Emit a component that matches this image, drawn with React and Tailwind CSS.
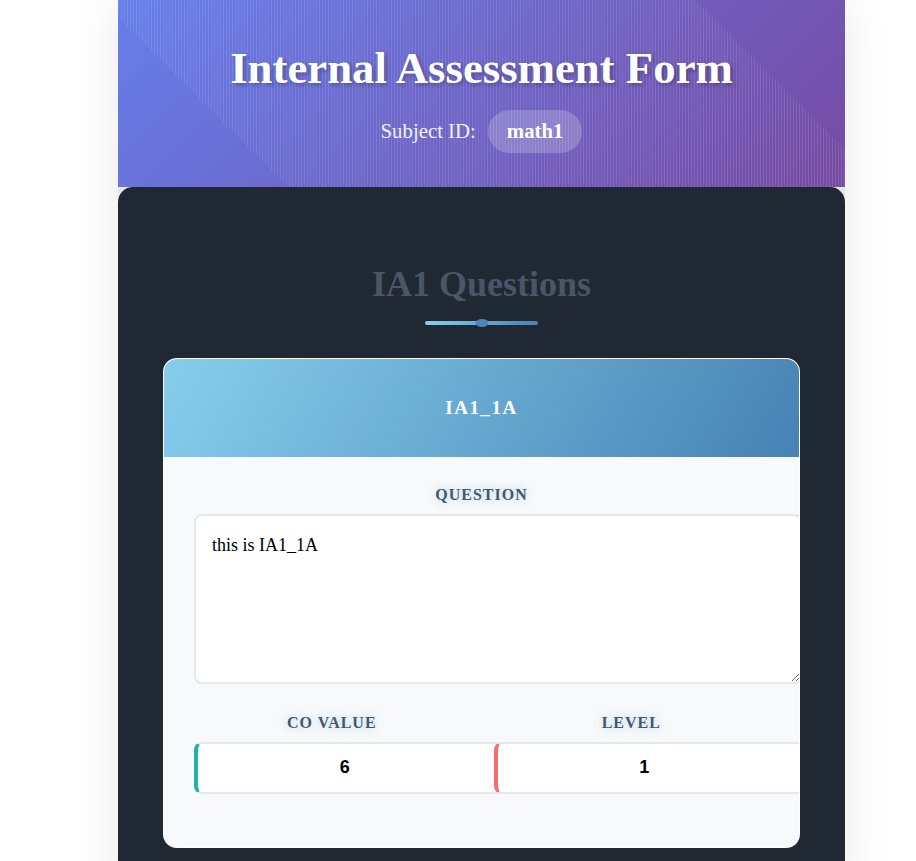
import React from 'react';

const serif = "font-['Liberation_Serif','Times_New_Roman',serif]";

const FieldLabel = ({ children, className = 'mb-[11px]' }) => (
  <div
    className={`${serif} ${className} text-center text-[16px] leading-[1.15] font-bold uppercase tracking-[1px] text-[#4a5568] [text-shadow:0_0_8px_rgba(135,206,235,0.75)]`}
  >
    {children}
  </div>
);

const NumberField = ({ label, value, accent }) => (
  <div>
    <FieldLabel className="mb-[10px]">{label}</FieldLabel>
    <input
      type="text"
      readOnly
      value={value}
      className={`block w-[calc(100%+40px)] bg-white border-2 border-l-4 ${accent} border-y-[#e2e8f0] border-r-[#e2e8f0] rounded-[8px] pt-[13px] pb-[14px] pr-[16px] text-center text-[18px] leading-[1.15] font-bold text-black font-['Liberation_Sans',Arial,sans-serif] outline-none`}
    />
  </div>
);

const QuestionCard = ({ question }) => (
  <div className="rounded-[14px] border border-white/90 overflow-hidden bg-[#f7f9fb]">
    <div className="bg-[linear-gradient(120deg,#87ceeb_0%,#4682b4_100%)] py-[38px] text-center">
      <h3 className={`${serif} text-[19px] leading-[1.15] font-bold tracking-[1.5px] text-white`}>
        {question.id}
      </h3>
    </div>
    <div className="px-[30px] pt-[29px] pb-[53px]">
      <FieldLabel className="mb-[9px]">Question</FieldLabel>
      <textarea
        readOnly
        value={question.text}
        className={`${serif} block w-[608px] h-[170px] bg-white border-2 border-[#e2e8f0] rounded-[8px] p-[16px] text-[18px] leading-[1.5] text-black outline-none`}
      />
      <div className="grid grid-cols-2 gap-x-[24px] mt-[30px]">
        <NumberField label="CO Value" value={question.co} accent="border-l-[#20b2aa]" />
        <NumberField label="Level" value={question.level} accent="border-l-[#ff6b6b]" />
      </div>
    </div>
  </div>
);

export default function App() {
  const questions = [{ id: 'IA1_1A', text: 'this is IA1_1A', co: '6', level: '1' }];

  return (
    <div className="min-h-screen bg-white">
      <div className="ml-[118px] w-[727px] bg-[#dfe8ea] shadow-[0_0_45px_rgba(0,0,0,0.09)]">
        <header className="relative h-[187px] overflow-hidden bg-[linear-gradient(135deg,#667eea_0%,#764ba2_100%)]">
          <div className="absolute inset-0 bg-[repeating-linear-gradient(90deg,rgba(255,255,255,0.11)_0px,rgba(255,255,255,0.11)_1px,transparent_1px,transparent_3px)] [clip-path:polygon(0_0,577px_0,727px_150px,727px_187px,170px_187px,0_17px)]" />
          <div className="relative flex flex-col items-center pt-[43px]">
            <h1
              className={`${serif} text-[44.8px] leading-[1.15] font-bold text-white [text-shadow:2px_2px_4px_rgba(0,0,0,0.3)]`}
            >
              Internal Assessment Form
            </h1>
            <div className={`${serif} mt-[15px] flex items-center text-[20.8px] leading-[1.15] text-white/90`}>
              <span>Subject ID:</span>
              <span className="ml-[12px] rounded-full bg-white/20 px-[19px] py-[9.6px] font-bold text-white">
                math1
              </span>
            </div>
          </div>
        </header>

        <main className="rounded-t-[15px] bg-[#1f2833] pt-[77px] pb-[40px]">
          <h2 className={`${serif} text-center text-[36px] leading-[1.15] font-bold text-[#4a5568]`}>
            IA1 Questions
          </h2>
          <div className="relative mx-auto mt-[16px] mb-[33px] h-[4px] w-[113px] rounded-full bg-[linear-gradient(90deg,#87ceeb,#4682b4)]">
            <span className="absolute left-1/2 top-1/2 h-[8px] w-[13px] -translate-x-1/2 -translate-y-1/2 rounded-[50%] bg-[#4a86bc]" />
          </div>
          <div className="mx-[45px] flex flex-col gap-[30px]">
            {questions.map((q) => (
              <QuestionCard key={q.id} question={q} />
            ))}
          </div>
        </main>
      </div>
    </div>
  );
}
